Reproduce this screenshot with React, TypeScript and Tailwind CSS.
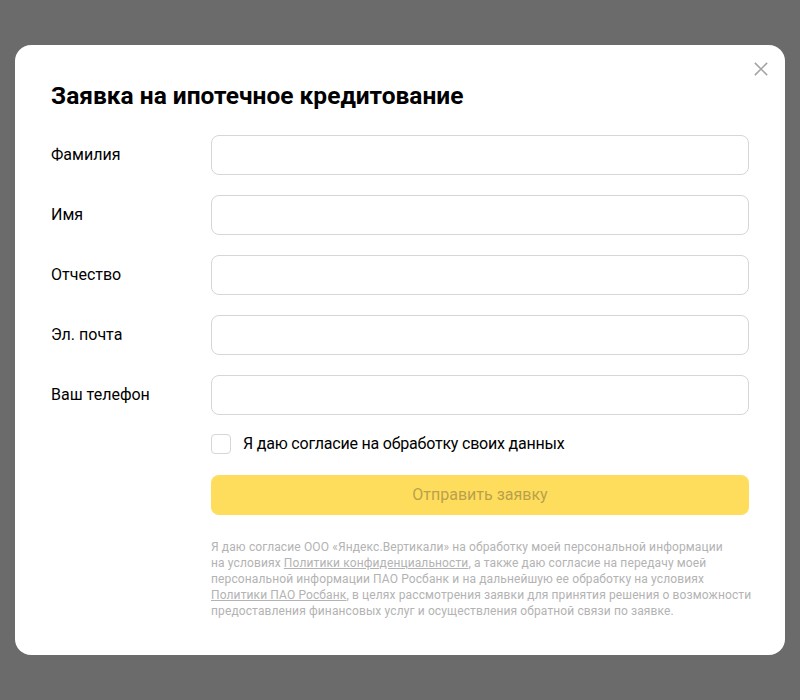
import { useState } from "react";

const fields = ["Фамилия", "Имя", "Отчество", "Эл. почта", "Ваш телефон"];

export default function App() {
  const [agree, setAgree] = useState(false);

  return (
    <div
      className="w-[800px] h-[700px] bg-[#6b6b6b] flex items-center justify-center"
      style={{ fontFamily: "Roboto, 'Noto Sans', sans-serif" }}
    >
      <div className="relative w-[770px] bg-white rounded-[16px] px-[36px] pt-[36px] pb-[36px]">
        <button className="absolute right-[17px] top-[17px] w-[14px] h-[14px] flex items-center justify-center text-[#a3a3a3]">
          <svg width="16" height="16" viewBox="0 0 16 16" fill="none">
            <path d="M1 1L15 15M15 1L1 15" stroke="currentColor" strokeWidth="1.8" />
          </svg>
        </button>

        <h1 className="text-[24.5px] leading-[30px] font-bold text-black">
          Заявка на ипотечное кредитование
        </h1>

        <div className="mt-[24px] flex flex-col gap-[20px]">
          {fields.map((label) => (
            <div key={label} className="flex items-center">
              <label className="w-[160px] shrink-0 text-[16px] text-black">{label}</label>
              <input
                type="text"
                className="flex-1 h-[40px] rounded-[8px] border border-[#d6d6d6] px-3 outline-none text-[16px]"
              />
            </div>
          ))}
        </div>

        <div className="ml-[160px]">
          <label className="mt-[19px] flex items-center h-[20px] cursor-pointer">
            <input
              type="checkbox"
              checked={agree}
              onChange={() => setAgree(!agree)}
              className="sr-only"
            />
            <span className="w-[20px] h-[20px] rounded-[4px] border border-[#d6d6d6] bg-white" />
            <span className="ml-[12px] text-[16px] text-black tracking-[-0.2px]">
              Я даю согласие на обработку своих данных
            </span>
          </label>

          <button className="mt-[21px] w-full h-[40px] rounded-[8px] bg-[#ffdd5c] text-[16px] text-[#b9a14c]">
            Отправить заявку
          </button>

          {/* legal text, lines broken as in the original */}
          <p className="mt-[24px] text-[12px] leading-[16px] tracking-[0.12px] text-[#b3b3b3] whitespace-nowrap">
            Я даю согласие ООО «Яндекс.Вертикали» на обработку моей персональной информации
            <br />
            на условиях <span className="underline">Политики конфиденциальности</span>, а также даю согласие на
            передачу моей
            <br />
            персональной информации ПАО Росбанк и на дальнейшую ее обработку на условиях
            <br />
            <span className="underline">Политики ПАО Росбанк</span>, в целях рассмотрения заявки для принятия решения о
            возможности
            <br />
            предоставления финансовых услуг и осуществления обратной связи по заявке.
          </p>
        </div>
      </div>
    </div>
  );
}
